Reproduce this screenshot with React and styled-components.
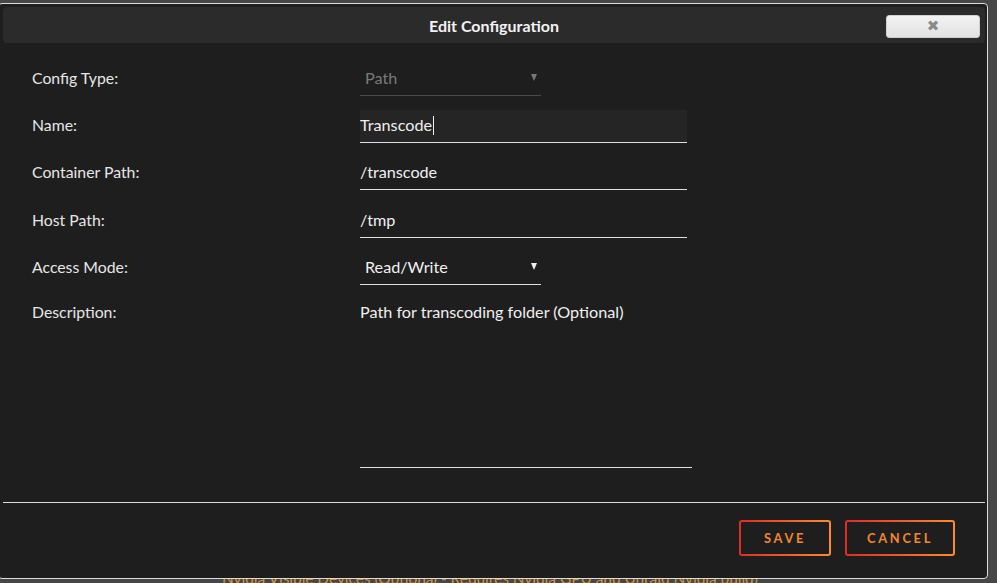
import React from 'react';
import styled, { createGlobalStyle } from 'styled-components';

const GlobalStyle = createGlobalStyle`
  html, body {
    margin: 0;
    padding: 0;
    background: #474747;
    font-family: Lato, "Noto Sans", sans-serif;
    overflow: hidden;
  }
`;

const Page = styled.div`
  height: 583px;
  padding: 569px 0 0 222px;
  box-sizing: border-box;
  color: #d8922c;
  font-size: 15.4px;
  white-space: nowrap;
`;

const Modal = styled.div`
  position: fixed;
  left: -2px;
  top: 3px;
  width: 990px;
  height: 576px;
  box-sizing: border-box;
  background: #1e1e1e;
  border: 1px solid #dcdcdc;
  border-radius: 4px;
  display: flex;
  flex-direction: column;
`;

const Header = styled.div`
  position: relative;
  height: 36px;
  margin: 3px 2px 0 4px;
  background: #2b2b2b;
  border-radius: 4px;
  display: flex;
  align-items: center;
  justify-content: center;
`;

const Title = styled.span`
  color: #f2f2f2;
  font-weight: 700;
  font-size: 16px;
`;

const CloseButton = styled.button`
  position: absolute;
  right: 5px;
  top: 8px;
  width: 94px;
  height: 23px;
  border: 1px solid #d0d0d0;
  border-radius: 3px;
  background: linear-gradient(#f2f2f2, #e2e2e2);
  color: #8a8a8a;
  font-size: 15px;
  font-weight: 900;
  line-height: 1;
  padding: 0;
  font-family: "DejaVu Sans", sans-serif;
`;

const Body = styled.div`
  flex: 1;
  display: grid;
  grid-template-columns: 328px 340px;
  grid-auto-rows: 33px;
  row-gap: 14.2px;
  padding: 20px 0 0 33px;
  align-content: start;
`;

const Label = styled.div`
  color: #e6e6e6;
  font-size: 15.8px;
  display: flex;
  align-items: ${p => (p.top ? 'flex-start' : 'center')};
  padding: ${p => (p.top ? '3px 0 0' : '0 0 4px')};
`;

const Field = styled.div`
  width: ${p => p.width || 327}px;
  height: 100%;
  box-sizing: border-box;
  display: flex;
  align-items: center;
  justify-content: space-between;
  padding: 0 ${p => (p.select ? '4px' : '0')} 3px ${p => (p.select ? '5px' : '0')};
  background: ${p => (p.focused ? '#252525' : 'transparent')};
  border-bottom: 1px solid ${p => (p.dim ? '#4a4a4a' : '#e0e0e0')};
  color: ${p => (p.dim ? '#7a7a7a' : '#f0f0f0')};
  font-size: 16.2px;
`;

const Caret = styled.span`
  display: inline-block;
  width: 1px;
  height: 19px;
  background: #f0f0f0;
  margin-left: 1px;
  vertical-align: -4px;
`;

const Arrow = styled.span`
  width: 0;
  height: 0;
  border-left: 3.5px solid transparent;
  border-right: 3.5px solid transparent;
  border-top: 7px solid ${p => (p.dim ? '#777' : '#f0f0f0')};
`;

const TextArea = styled.div`
  width: 332px;
  height: 169px;
  box-sizing: border-box;
  padding-top: 3px;
  border-bottom: 1px solid #e0e0e0;
  color: #f0f0f0;
  font-size: 16.2px;
`;

const Footer = styled.div`
  margin: 0 2px 0 4px;
  border-top: 1px solid #dcdcdc;
  height: 76px;
  display: flex;
  justify-content: flex-end;
  align-items: flex-start;
  gap: 14px;
  padding: 17px 30px 0 0;
  box-sizing: border-box;
`;

const ActionButton = styled.button`
  height: 36px;
  padding: 0 ${p => p.pad}px;
  border: 2px solid transparent;
  border-radius: 3px;
  background: linear-gradient(#1e1e1e, #1e1e1e) padding-box,
    linear-gradient(90deg, #e22a26, #ff8a2e) border-box;
  color: #f5862d;
  font-family: Lato, "Noto Sans", sans-serif;
  font-weight: 700;
  font-size: 12.8px;
  letter-spacing: 2.7px;
`;

export default function App() {
  return (
    <>
      <GlobalStyle />
      <Page>Nvidia Visible Devices (Optional - Requires Nvidia GPU and Unraid Nvidia build)</Page>
      <Modal>
        <Header>
          <Title>Edit Configuration</Title>
          <CloseButton>✖</CloseButton>
        </Header>
        <Body>
          <Label>Config Type:</Label>
          <Field select dim width={181}>
            <span>Path</span>
            <Arrow dim />
          </Field>

          <Label>Name:</Label>
          <Field focused>
            <span>Transcode<Caret /></span>
          </Field>

          <Label>Container Path:</Label>
          <Field>/transcode</Field>

          <Label>Host Path:</Label>
          <Field>/tmp</Field>

          <Label>Access Mode:</Label>
          <Field select width={181}>
            <span>Read/Write</span>
            <Arrow />
          </Field>

          <Label top>Description:</Label>
          <TextArea>Path for transcoding folder (Optional)</TextArea>
        </Body>
        <Footer>
          <ActionButton pad={23}>SAVE</ActionButton>
          <ActionButton pad={20}>CANCEL</ActionButton>
        </Footer>
      </Modal>
    </>
  );
}
